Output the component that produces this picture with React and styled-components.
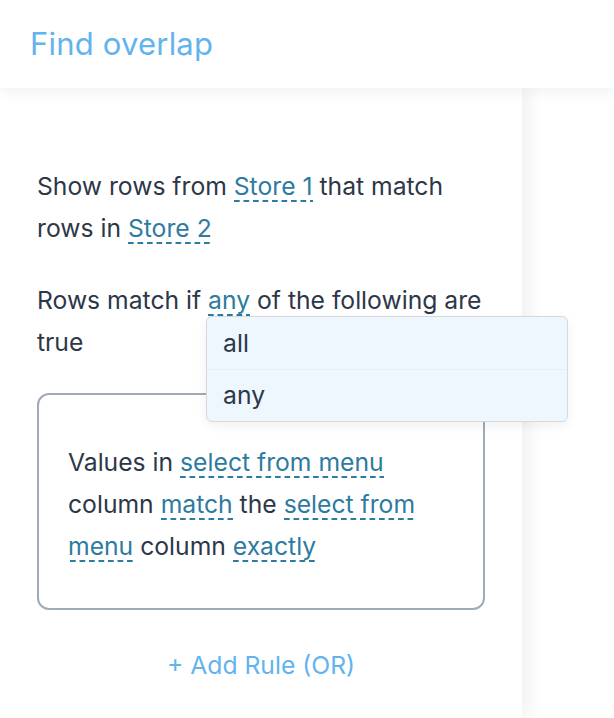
import React from "react";
import styled, { createGlobalStyle } from "styled-components";

const Global = createGlobalStyle`
  html, body { margin: 0; padding: 0; background: #ffffff; }
  body { font-family: Inter, "Noto Sans", sans-serif; width: 614px; height: 718px; overflow: hidden; }
  * { box-sizing: border-box; }
`;

const Page = styled.div`
  width: 614px;
  height: 718px;
  display: flex;
  flex-direction: column;
  background: #ffffff;
  position: relative;
  overflow: hidden;
`;

const Header = styled.header`
  height: 88px;
  flex: none;
  display: flex;
  align-items: center;
  padding: 0 30px 2px;
  background: #ffffff;
  box-shadow: 0 4px 12px rgba(40, 60, 90, 0.07);
  position: relative;
  z-index: 2;
`;

const Title = styled.h1`
  margin: 0;
  font-family: Inter, sans-serif;
  font-weight: 400;
  font-size: 31px;
  letter-spacing: 0.2px;
  color: #63b3ed;
`;

const Body = styled.div`
  flex: 1;
  display: flex;
  min-height: 0;
`;

const Panel = styled.section`
  width: 522px;
  flex: none;
  padding: 77px 37px 0;
  background: #ffffff;
  box-shadow: 8px 0 16px rgba(0, 0, 0, 0.055);
  position: relative;
  z-index: 1;
`;

const Side = styled.div`
  flex: 1;
  background: #ffffff;
`;

const Para = styled.p`
  margin: 0 0 30px;
  width: 452px;
  font-size: 24.7px;
  line-height: 42px;
  color: #2d3748;
`;

const Link = styled.span`
  color: #2d7ba0;
  padding-bottom: 1px;
  background-image: linear-gradient(to right, #2d7ba0 62%, transparent 62%);
  background-size: 9.5px 2px;
  background-repeat: repeat-x;
  background-position: 0 100%;
  cursor: pointer;
`;

const Anchor = styled.span`
  position: relative;
`;

const Menu = styled.ul`
  position: absolute;
  left: -2px;
  top: 31px;
  width: 362px;
  margin: 0;
  padding: 0;
  list-style: none;
  background: #eef6fe;
  border: 1px solid #d6d9dd;
  border-radius: 6px;
  box-shadow: 0 4px 12px rgba(0, 0, 0, 0.06);
  z-index: 5;
`;

const MenuItem = styled.li`
  height: 52px;
  display: flex;
  align-items: center;
  padding: 0 16px;
  font-size: 24.7px;
  color: #2d3748;
  line-height: 1;
  & + & { border-top: 1px solid #e6eef6; }
`;

const RuleBox = styled.div`
  width: 448px;
  margin-top: 30px;
  padding: 46px 28px 41px 29px;
  border: 2px solid #a0abb8;
  border-radius: 12px;
`;

const RuleText = styled.p`
  margin: 0;
  font-size: 24.7px;
  line-height: 42px;
  color: #2d3748;
`;

const AddRule = styled.button`
  display: block;
  margin: 34px auto 0;
  padding: 0;
  border: none;
  background: none;
  font-family: Inter, sans-serif;
  font-size: 24.7px;
  line-height: 42px;
  color: #63b3ed;
  cursor: pointer;
`;

export default function App() {
  return (
    <>
      <Global />
      <Page>
        <Header>
          <Title>Find overlap</Title>
        </Header>
        <Body>
          <Panel>
            <Para>
              Show rows from <Link>Store 1</Link> that match rows in <Link>Store 2</Link>
            </Para>
            <Para>
              Rows match if{" "}
              <Anchor>
                <Link>any</Link>
                <Menu>
                  <MenuItem>all</MenuItem>
                  <MenuItem>any</MenuItem>
                </Menu>
              </Anchor>{" "}
              of the following are true
            </Para>
            <RuleBox>
              <RuleText>
                Values in <Link>select from menu</Link> column <Link>match</Link> the{" "}
                <Link>select from menu</Link> column <Link>exactly</Link>
              </RuleText>
            </RuleBox>
            <AddRule>+ Add Rule (OR)</AddRule>
          </Panel>
          <Side />
        </Body>
      </Page>
    </>
  );
}
